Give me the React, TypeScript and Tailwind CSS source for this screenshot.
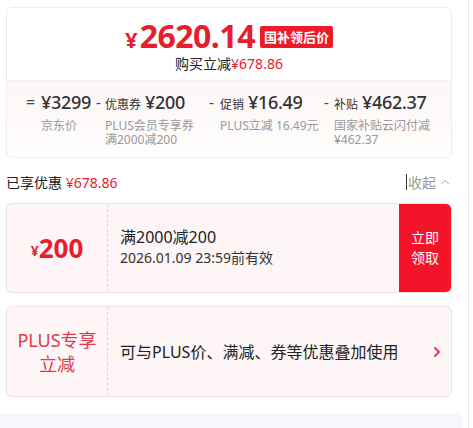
import { ChevronRight, ChevronUp } from "lucide-react";

const FONT = { fontFamily: '"Noto Sans", "Noto Sans CJK SC", sans-serif' };

const BREAKDOWN: Array<{ op: string; label?: string; value: string; sub: string[]; w: string; opW: string }> = [
  { op: "=", value: "¥3299", sub: ["京东价"], w: "w-[70px]", opW: "w-[15px]" },
  { op: "-", label: "优惠券", value: "¥200", sub: ["PLUS会员专享券", "满2000减200"], w: "w-[113px]", opW: "w-[9px]" },
  { op: "-", label: "促销", value: "¥16.49", sub: ["PLUS立减 16.49元"], w: "w-[115px]", opW: "w-[11px]" },
  { op: "-", label: "补贴", value: "¥462.37", sub: ["国家补贴云闪付减", "¥462.37"], w: "w-[118px]", opW: "w-[10px]" },
];

export default function App() {
  return (
    <div className="w-[473px] h-[428px] bg-white flex overflow-hidden text-[#333]" style={FONT}>
      <div className="w-[468px] flex flex-col">
        <main className="flex-1 pl-[6px] pr-[16px] pt-[7px]">
          {/* price summary */}
          <section className="rounded-md border border-[#f1e9ea] overflow-hidden">
            <div className="h-[72px] bg-white flex flex-col items-center pt-[11px] relative">
              <div className="flex items-center gap-[5px] h-[34px]">
                <div className="text-[#e5202e] font-bold leading-none flex items-baseline">
                  <span className="text-[22px] mr-[2px]">¥</span>
                  <span className="text-[32px] tracking-[-0.5px]">2620.14</span>
                </div>
                <span className="bg-[#ec1b2a] text-white text-[13px] font-bold rounded-[2px] px-[4px] h-[22px] leading-[22px] mt-[2px]">
                  国补领后价
                </span>
              </div>
              <div className="text-[14px] leading-[20px] mt-[1px]">
                <span className="text-[#222]">购买立减</span>
                <span className="text-[#e5202e]">¥678.86</span>
              </div>
              <div className="absolute bottom-0 left-[230px] w-0 h-0 border-x-[4px] border-x-transparent border-b-[4px] border-b-[#fdf6f6]" />
            </div>
            <div className="h-[77px] bg-gradient-to-b from-[#fdf6f6] to-[#fffdfd] border-t border-[#f7eeee] flex pl-[19px] pt-[9px]">
              {BREAKDOWN.map((item) => (
                <div key={item.value} className={`${item.w} shrink-0 flex`}>
                  <span className={`${item.opW} ${item.op === "=" ? "text-[16px]" : "text-[15px]"} leading-[24px] shrink-0 text-[#444]`}>
                    {item.op}
                  </span>
                  <div className="min-w-0">
                    <div className="flex items-baseline whitespace-nowrap h-[24px]">
                      {item.label && <span className="text-[12px] text-[#333] mr-[4px]">{item.label}</span>}
                      <span className="text-[18px] font-medium text-[#333] leading-[24px] tracking-[-0.3px]">{item.value}</span>
                    </div>
                    <div className="mt-[5px] text-[12px] leading-[14px] text-[#999] whitespace-nowrap">
                      {item.sub.map((s) => (
                        <div key={s}>{s}</div>
                      ))}
                    </div>
                  </div>
                </div>
              ))}
            </div>
          </section>

          {/* enjoyed discount */}
          <div className="flex items-center justify-between h-[20px] mt-[14px]">
            <div className="text-[14px]">
              <span className="text-[#222]">已享优惠 </span>
              <span className="text-[#e5202e]">¥678.86</span>
            </div>
            <div className="flex items-center text-[14px] text-[#999]">
              <span className="w-px h-[16px] bg-[#333] mr-[1px]" />
              收起
              <ChevronUp className="w-[14px] h-[14px] ml-[2px]" strokeWidth={1.5} />
            </div>
          </div>

          {/* coupon */}
          <div className="mt-[11px] h-[90px] flex rounded-md border border-[#f4dfe2] bg-[#fdf5f6] overflow-hidden">
            <div className="w-[100px] flex items-center justify-center text-[#e5202e] font-bold">
              <span className="text-[14px] mt-[4px]">¥</span>
              <span className="text-[26px] leading-none">200</span>
            </div>
            <div className="border-l border-dashed border-[#e8cfd3]" />
            <div className="flex-1 flex flex-col justify-center pl-[12px] pb-[2px]">
              <div className="text-[16px] leading-[21px] text-[#222]">满2000减200</div>
              <div className="text-[14px] leading-[20px] text-[#333]">2026.01.09 23:59前有效</div>
            </div>
            <button className="w-[52px] bg-[#f3142a] text-white text-[14px] leading-[20px] flex items-center justify-center text-center">
              立即
              <br />
              领取
            </button>
          </div>

          {/* plus discount */}
          <div className="mt-[13px] h-[91px] flex rounded-md border border-[#f4dfe2] bg-[#fdf5f6] overflow-hidden">
            <div className="w-[100px] flex items-center justify-center text-center text-[#e03a4a] text-[18px] leading-[24px]">
              PLUS专享
              <br />
              立减
            </div>
            <div className="border-l border-dashed border-[#e8cfd3]" />
            <div className="flex-1 flex items-center pl-[12px] text-[16px] text-[#222] whitespace-nowrap">
              可与PLUS价、满减、券等优惠叠加使用
            </div>
            <div className="flex items-center pr-[6px]">
              <ChevronRight className="w-[16px] h-[16px] text-[#e03a4a]" strokeWidth={3} />
            </div>
          </div>
        </main>
        <div className="h-[15px] bg-[#f5f7fa] mr-[6px]" />
      </div>
      <div className="w-px bg-[#e8e8e8]" />
    </div>
  );
}
